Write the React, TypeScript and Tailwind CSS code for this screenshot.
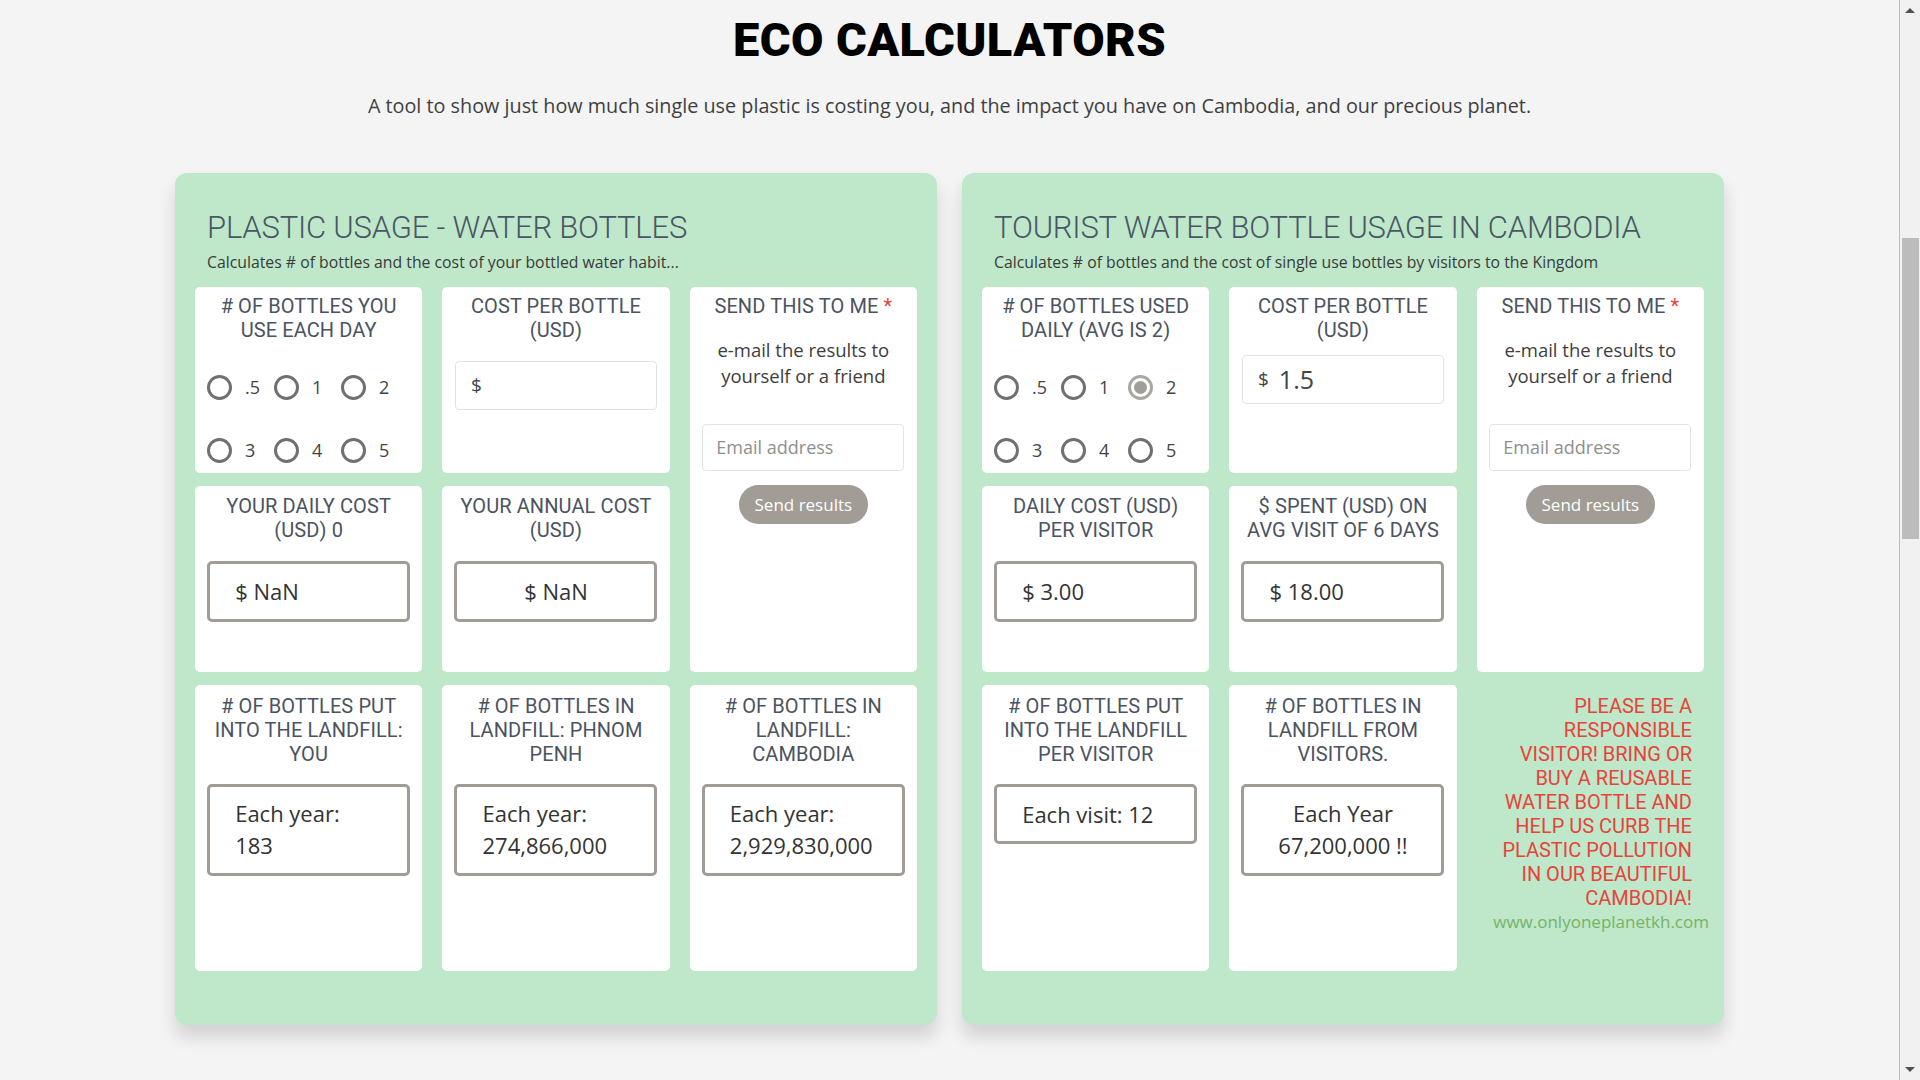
import React from 'react'

const heading =
  "font-['Roboto',sans-serif] text-[20px] leading-[24px] tracking-[0.1px] text-[#4b5361] uppercase text-center whitespace-nowrap"
const body = "font-['Open_Sans',sans-serif]"

function Card({ children, className = '' }: { children: React.ReactNode; className?: string }) {
  return <div className={`bg-white rounded-[5px] flex flex-col items-center ${className}`}>{children}</div>
}

function Radio({ label, checked = false }: { label: string; checked?: boolean }) {
  return (
    <div className="flex items-center gap-[13px]">
      <span
        className={`w-[25px] h-[25px] rounded-full border-[3px] flex items-center justify-center ${
          checked ? 'border-[#aaa6a0]' : 'border-[#707070]'
        }`}
      >
        {checked && <span className="w-[13px] h-[13px] rounded-full bg-[#a19d97]" />}
      </span>
      <span className={`${body} text-[18px] text-[#444]`}>{label}</span>
    </div>
  )
}

function RadioCard({ title, selected }: { title: React.ReactNode; selected?: string }) {
  const vals = ['.5', '1', '2', '3', '4', '5']
  return (
    <Card className="pt-[7px]">
      <div className={heading}>{title}</div>
      <div className="self-start ml-[12px] mt-[32px] grid grid-cols-[67px_67px_67px] gap-y-[36px]">
        {vals.map(v => (
          <Radio key={v} label={v} checked={v === selected} />
        ))}
      </div>
    </Card>
  )
}

function CostCard({ value, top }: { value?: string; top: string }) {
  return (
    <Card className="pt-[7px]">
      <div className={heading}>
        COST PER BOTTLE
        <br />
        (USD)
      </div>
      <div
        className={`${top} w-[202px] h-[49px] border border-[#e2e2e2] rounded-[4px] flex items-center px-[15px] gap-[10px] text-[#444]`}
      >
        <span className={`${body} text-[19px]`}>$</span>
        {value && <span className={`${body} text-[25px]`}>{value}</span>}
      </div>
    </Card>
  )
}

function SendCard() {
  return (
    <Card className="row-span-2 pt-[7px]">
      <div className={heading}>
        SEND THIS TO ME <span className="text-[#e5453c]">*</span>
      </div>
      <p className={`${body} mt-[19px] text-[18.5px] leading-[26px] text-[#3d3d3d] text-center`}>
        e-mail the results to
        <br />
        yourself or a friend
      </p>
      <div
        className={`${body} mt-[35px] w-[202px] h-[47px] border border-[#e4e4e4] rounded-[4px] flex items-center px-[13px] text-[18px] text-[#8f8f8f]`}
      >
        Email address
      </div>
      <button
        type="button"
        className={`${body} mt-[14px] w-[129px] h-[39px] rounded-full bg-[#a19c95] text-white text-[17px]`}
      >
        Send results
      </button>
    </Card>
  )
}

function OutCard({ title, value, center = false }: { title: React.ReactNode; value: string; center?: boolean }) {
  return (
    <Card className="pt-[8px]">
      <div className={heading}>{title}</div>
      <div
        className={`${body} mt-[19px] w-[203px] h-[61px] border-[3px] border-[#a19d96] rounded-[5px] flex items-center text-[22px] text-[#333] ${
          center ? 'justify-center' : 'pl-[25px]'
        }`}
      >
        {value}
      </div>
    </Card>
  )
}

function BottleCard({
  title,
  lines,
  center = false,
  small = false,
}: {
  title: React.ReactNode
  lines: string[]
  center?: boolean
  small?: boolean
}) {
  return (
    <Card className="pt-[9px]">
      <div className={heading}>{title}</div>
      <div
        className={`${body} mt-[18px] w-[203px] border-[3px] border-[#a19d96] rounded-[5px] flex flex-col text-[22px] leading-[32px] text-[#333] ${
          small ? 'h-[60px] justify-center' : 'h-[92px] pt-[10px]'
        } ${center ? 'items-center' : 'pl-[25px]'}`}
      >
        {lines.map(l => (
          <span key={l}>{l}</span>
        ))}
      </div>
    </Card>
  )
}

function Panel({ title, sub, children }: { title: string; sub: string; children: React.ReactNode }) {
  return (
    <div className="w-[762px] h-[852px] rounded-[12px] bg-[#bee8c9] shadow-[0_12px_18px_rgba(0,0,0,0.14)] px-[20px] pt-[35px]">
      <h2 className="pl-[12px] font-['Roboto',sans-serif] font-light text-[31px] leading-[40px] tracking-[-0.2px] text-[#4a5666] whitespace-nowrap">
        {title}
      </h2>
      <p className={`${body} pl-[12px] mt-[4px] text-[15.8px] leading-[20px] text-[#3a3a3a] whitespace-nowrap`}>{sub}</p>
      <div className="mt-[15px] grid grid-cols-3 grid-rows-[186px_186px_286px] gap-x-[20px] gap-y-[13px]">
        {children}
      </div>
    </div>
  )
}

function Scrollbar() {
  return (
    <div className="w-[21px] shrink-0 bg-[#f1f1f1] border-l border-[#bdbdbd] flex flex-col items-center">
      <div className="h-[21px] flex items-center justify-center">
        <span className="w-0 h-0 border-x-[5px] border-x-transparent border-b-[5px] border-b-[#505050]" />
      </div>
      <div className="h-[217px]" />
      <div className="w-[17px] h-[301px] bg-[#bcbcbc]" />
      <div className="flex-1" />
      <div className="h-[21px] flex items-center justify-center">
        <span className="w-0 h-0 border-x-[5px] border-x-transparent border-t-[5px] border-t-[#505050]" />
      </div>
    </div>
  )
}

export default function App() {
  return (
    <div className="w-full h-[1080px] overflow-hidden bg-[#f4f4f4] flex">
      <main className="flex-1 flex flex-col items-center">
        <h1 className="mt-[16px] font-['Roboto',sans-serif] font-black text-[47px] leading-[48px] text-black tracking-[0.4px]">
          ECO CALCULATORS
        </h1>
        <p className={`${body} mt-[30px] text-[19.8px] leading-[24px] text-[#3f3f3f]`}>
          A tool to show just how much single use plastic is costing you, and the impact you have on Cambodia, and our
          precious planet.
        </p>
        <div className="mt-[55px] flex gap-[25px]">
          <Panel title="PLASTIC USAGE - WATER BOTTLES" sub="Calculates # of bottles and the cost of your bottled water habit...">
            <RadioCard
              title={
                <>
                  # OF BOTTLES YOU
                  <br />
                  USE EACH DAY
                </>
              }
            />
            <CostCard top="mt-[19px]" />
            <SendCard />
            <OutCard
              title={
                <>
                  YOUR DAILY COST
                  <br />
                  (USD) 0
                </>
              }
              value="$ NaN"
            />
            <OutCard
              title={
                <>
                  YOUR ANNUAL COST
                  <br />
                  (USD)
                </>
              }
              value="$ NaN"
              center
            />
            <BottleCard
              title={
                <>
                  # OF BOTTLES PUT
                  <br />
                  INTO THE LANDFILL:
                  <br />
                  YOU
                </>
              }
              lines={['Each year:', '183']}
            />
            <BottleCard
              title={
                <>
                  # OF BOTTLES IN
                  <br />
                  LANDFILL: PHNOM
                  <br />
                  PENH
                </>
              }
              lines={['Each year:', '274,866,000']}
            />
            <BottleCard
              title={
                <>
                  # OF BOTTLES IN
                  <br />
                  LANDFILL:
                  <br />
                  CAMBODIA
                </>
              }
              lines={['Each year:', '2,929,830,000']}
            />
          </Panel>

          <Panel
            title="TOURIST WATER BOTTLE USAGE IN CAMBODIA"
            sub="Calculates # of bottles and the cost of single use bottles by visitors to the Kingdom"
          >
            <RadioCard
              title={
                <>
                  # OF BOTTLES USED
                  <br />
                  DAILY (AVG IS 2)
                </>
              }
              selected="2"
            />
            <CostCard top="mt-[13px]" value="1.5" />
            <SendCard />
            <OutCard
              title={
                <>
                  DAILY COST (USD)
                  <br />
                  PER VISITOR
                </>
              }
              value="$ 3.00"
            />
            <OutCard
              title={
                <>
                  $ SPENT (USD) ON
                  <br />
                  AVG VISIT OF 6 DAYS
                </>
              }
              value="$ 18.00"
            />
            <BottleCard
              title={
                <>
                  # OF BOTTLES PUT
                  <br />
                  INTO THE LANDFILL
                  <br />
                  PER VISITOR
                </>
              }
              lines={['Each visit: 12']}
              small
            />
            <BottleCard
              title={
                <>
                  # OF BOTTLES IN
                  <br />
                  LANDFILL FROM
                  <br />
                  VISITORS.
                </>
              }
              lines={['Each Year', '67,200,000 !!']}
              center
            />
            <div className="flex flex-col items-end pt-[9px] pr-[12px]">
              <p className="font-['Roboto',sans-serif] text-[20px] leading-[24px] text-[#e8433b] text-right whitespace-nowrap">
                PLEASE BE A
                <br />
                RESPONSIBLE
                <br />
                VISITOR! BRING OR
                <br />
                BUY A REUSABLE
                <br />
                WATER BOTTLE AND
                <br />
                HELP US CURB THE
                <br />
                PLASTIC POLLUTION
                <br />
                IN OUR BEAUTIFUL
                <br />
                CAMBODIA!
              </p>
              <span
                className={`${body} mr-[-17px] mt-[1px] text-[17px] leading-[22px] text-[#76b266] whitespace-nowrap`}
              >
                www.onlyoneplanetkh.com
              </span>
            </div>
          </Panel>
        </div>
      </main>
      <Scrollbar />
    </div>
  )
}
